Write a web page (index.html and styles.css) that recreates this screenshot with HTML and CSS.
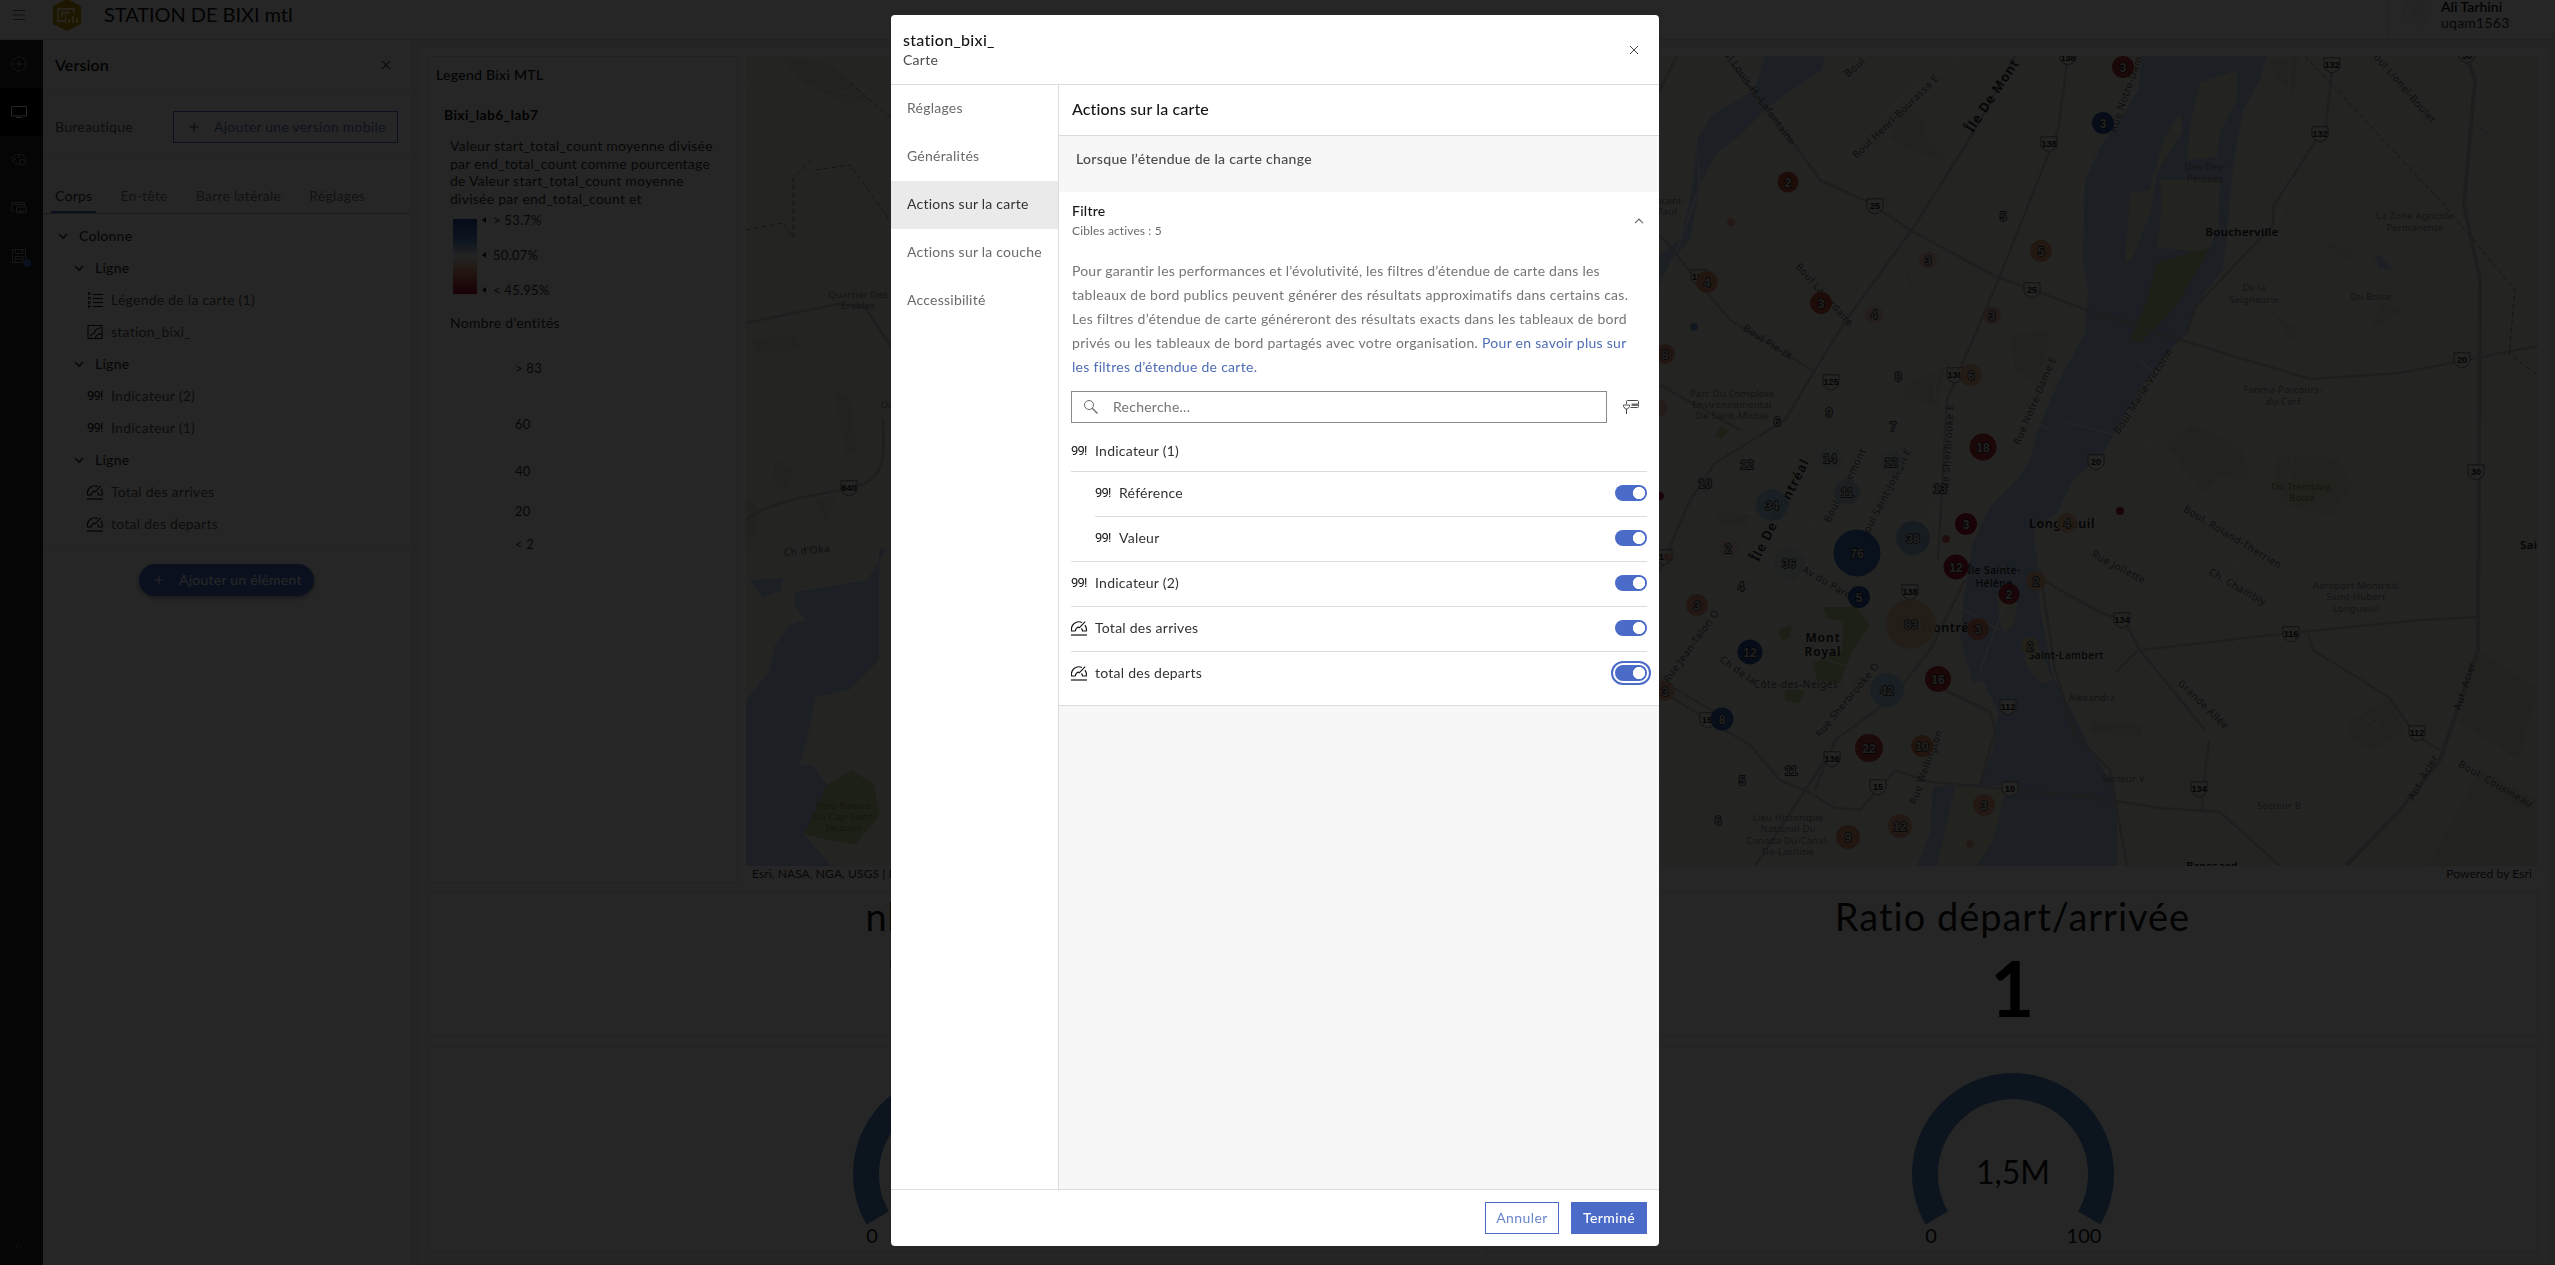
FILE: index.html
```html
<!DOCTYPE html>
<html lang="fr">
<head>
<meta charset="utf-8">
<title>STATION DE BIXI mtl</title>
<link rel="stylesheet" href="styles.css">
</head>
<body>
<svg class="defs" aria-hidden="true">
  <defs>
    <symbol id="i-chev" viewBox="0 0 16 16"><path d="M4 6l4 4 4-4" fill="none" stroke="currentColor" stroke-width="1.600"/></symbol>
    <symbol id="i-plus" viewBox="0 0 16 16"><path d="M8 3.500v9M3.500 8h9" fill="none" stroke="currentColor"/></symbol>
    <symbol id="i-x" viewBox="0 0 16 16"><path d="M4 4l8 8M12 4l-8 8" fill="none" stroke="currentColor" stroke-width="1.100"/></symbol>
    <symbol id="i-gauge" viewBox="0 0 16 16"><path d="M0 15h16" stroke="currentColor" stroke-width="1.200"/><path d="M4.500 11H.7A7.300 7.300 0 0 1 11 2.600M13.900 5.200a7.300 7.300 0 0 1 1.400 5.800H11.500a3.500 3.500 0 0 0-1.100-2.500M4.500 11A3.500 3.500 0 0 1 8 7.100M14.200 1.700L8 8.100" fill="none" stroke="currentColor" stroke-width="1.150"/></symbol>
    <symbol id="i-legend" viewBox="0 0 16 16"><path d="M1 1.500h2.500M1 6h2.500M1 10.500h2.500M1 14.500h2.500" stroke="currentColor" stroke-width="2.500" stroke-dasharray="1.500 .5"/><path d="M6 2.500h10M6 6.500h10M6 10.500h10M6 14.500h10" stroke="currentColor"/></symbol>
    <symbol id="i-map" viewBox="0 0 16 16"><path d="M1 1.500h14v13H1zM3.500 12.500c0-3 1.500-2 3.500-3.500s1-3 3-4 3 0 3-2M8.500 14c0-2.500 1-1.500 2.500-3.500 1-1.300 2.500-.5 4 0" fill="none" stroke="currentColor" stroke-width="1.100"/></symbol>
    <symbol id="shield" viewBox="0 0 18 18"><path d="M1 1.500q4 1.200 8 0 4 1.200 8 0v8.500q0 4-8 7.200-8-3.200-8-7.200z" fill="#f0f0ea" stroke="#777"/></symbol>
  </defs>
</svg>

<div class="app">
  <header class="topbar">
    <svg class="burger" viewBox="0 0 12 10"><path d="M0 .5h12M0 5h12M0 9.500h12" stroke="#6a6a6a"/></svg>
    <svg class="logo" viewBox="0 0 28 32"><path d="M14 0l14 7v18l-14 7L0 25V7z" fill="#c89800"/><path d="M12 22H5V10h16v4M9 18v-4.500h8" fill="none" stroke="#fff2b8" stroke-width="1.800"/><path d="M12.500 14v10" stroke="#fff2b8"/><path d="M16 20v4M20 17v7M24 19v5" stroke="#fff2b8" stroke-width="1.800"/></svg>
    <h1 class="topbar-title">STATION DE BIXI mtl</h1>
    <div class="user">
      <svg class="avatar" viewBox="0 0 28 28"><circle cx="14" cy="14" r="13.500" fill="#f6f6f6" stroke="#e6e6e6"/><circle cx="14" cy="10.500" r="5" fill="none" stroke="#ddd"/><path d="M5 24c1-9 17-9 18 0" fill="none" stroke="#ddd"/></svg>
      <div class="user-text"><b>Ali Tarhini</b><span>uqam1563</span></div>
    </div>
  </header>

  <div class="workspace">
    <nav class="rail">
      <span class="rail-item"><svg viewBox="0 0 16 16"><circle cx="8" cy="8" r="7" fill="none" stroke="currentColor"/><path d="M8 4.500v7M4.500 8h7" stroke="currentColor"/></svg></span>
      <span class="rail-item on"><svg viewBox="0 0 16 16"><path d="M.5 2.500h15v9.500H.5zM5 13.500h6" fill="none" stroke="currentColor"/></svg></span>
      <span class="rail-item"><svg viewBox="0 0 16 16"><path d="M7 12c-2 1-3-.5-4-1.500C-1 7 2 2.500 8 2.500c4 0 7 2 7 4.500" fill="none" stroke="currentColor"/><circle cx="4" cy="7" r="1" fill="currentColor"/><circle cx="8" cy="5" r="1" fill="currentColor"/><circle cx="11.500" cy="10" r="3" fill="none" stroke="currentColor"/></svg></span>
      <span class="rail-item"><svg viewBox="0 0 16 16"><path d="M4 11H.5V2.500h13V6M.5 4.500h13M5.500 7h9.500v6H5.500z" fill="none" stroke="currentColor"/><path d="M7 12l2-2.500 1.500 1.500 1-1 2 2z" fill="currentColor"/></svg></span>
      <span class="rail-item"><svg viewBox="0 0 16 16"><path d="M1.500 1.500h13v13h-13zM4.500 1.500v4h7v-4M4 14.500v-6h8v6M4 11h8" fill="none" stroke="currentColor"/></svg><i class="rail-dot"></i></span>
      <svg class="rail-expand" viewBox="0 0 16 16"><path d="M3.500 3.500L7.500 8l-4 4.500M8.500 3.500l4 4.500-4 4.500" fill="none" stroke="currentColor"/></svg>
    </nav>

    <aside class="panel">
      <div class="panel-head"><h2>Version</h2><svg class="ic"><use href="#i-x"/></svg></div>
      <div class="panel-version"><span>Bureautique</span><span class="btn-outline"><svg class="ic"><use href="#i-plus"/></svg>Ajouter une version mobile</span></div>
      <div class="tabs"><span class="tab on">Corps</span><span class="tab">En-tête</span><span class="tab">Barre latérale</span><span class="tab">Réglages</span></div>
      <ul class="tree">
        <li class="l1"><svg class="ic"><use href="#i-chev"/></svg>Colonne</li>
        <li class="l2"><svg class="ic"><use href="#i-chev"/></svg>Ligne</li>
        <li class="l3"><svg class="ic"><use href="#i-legend"/></svg>Légende de la carte (1)</li>
        <li class="l3"><svg class="ic"><use href="#i-map"/></svg>station_bixi_</li>
        <li class="l2"><svg class="ic"><use href="#i-chev"/></svg>Ligne</li>
        <li class="l3"><span class="n99">99!</span>Indicateur (2)</li>
        <li class="l3"><span class="n99">99!</span>Indicateur (1)</li>
        <li class="l2"><svg class="ic"><use href="#i-chev"/></svg>Ligne</li>
        <li class="l3"><svg class="ic"><use href="#i-gauge"/></svg>Total des arrives</li>
        <li class="l3"><svg class="ic"><use href="#i-gauge"/></svg>total des departs</li>
      </ul>
      <div class="panel-add"><span class="btn-pill"><svg class="ic"><use href="#i-plus"/></svg>Ajouter un élément</span></div>
    </aside>

    <main class="board">
      <section class="row-top">
        <div class="card legend">
          <h3>Legend Bixi MTL</h3>
          <h4>Bixi_lab6_lab7</h4>
          <p>Valeur start_total_count moyenne divisée<br>par end_total_count comme pourcentage<br>de Valeur start_total_count moyenne<br>divisée par end_total_count et</p>
          <div class="ramp"><i class="ramp-bar"></i><div class="ramp-labels"><span>&gt; 53.7%</span><span>50.07%</span><span>&lt; 45.95%</span></div></div>
          <p class="count-title">Nombre d’entités</p>
          <div class="sizes"><span class="s1">&gt; 83</span><span class="s2">60</span><span class="s3">40</span><span class="s4">20</span><span class="s5">&lt; 2</span></div>
        </div>
        <div class="map">
          <svg class="map-svg" viewBox="746 56 1792 810" width="1792" height="810">
            <rect x="746" y="56" width="1792" height="810" fill="#f0f0e6"/>
            <g class="green">
              <path d="M780 56l50 8 40 35-20 6-45-20zM752 340l40-5 10 14-45 5zM835 390l15 10 8 50-12 6zM746 500l10 5v30l-10 10zM775 460l20 10-10 20-12-8zM815 500l20-5-8 30z"/>
              <path d="M1905 105l15 8 10 30 15 15-30-5-25-15zM1905 385l40-18-8 40-35-10zM1900 260l14 25 20 8-25-8zM1720 510l30 5-5 12-28-4zM2010 335l40-5-10 55-25-15z"/>
              <path d="M2166 445l25-20 50 20 10 35-30-3-18 15zM2278 455l60 3 15 30-18 30-55-15-5-30zM2350 720l40-22 14 35-34 18-22-14zM2480 650l58 40-20 70-60-40zM2480 770l58 30v66h-110zM2320 240l35 12-8 8zM2370 330l12-28 20 8zM2270 310l28 20-4 12zM2090 722l52 2v12l-52-3zM2268 60l30-4-4 40-20-20z"/>
            </g>
            <g class="water">
              <path d="M887 549L867 580l-47 8-25 4-1 13 11 15-16 5-14 20-6 27-23 28v166h86l-28-31 23-50-15-20-12 0 9-35 6-33 34-7 30-30V549zM750 580l25-2 8 12-20 7zM775 578l10 0-5 8z"/>
              <path d="M1765 56h60l-3 14-37 25-20 15-25 25-25 20-15 30-10 55-20 22-11 23v-30l21-15 12-50 5-50 15-25 43-25z"/>
              <path d="M2142 56L2138 90 2120 120 2104 140 2085 180 2083 257 2088 293 2085 333 2063 373 2047 407 2037 433 2030 460 2017 480 1990 507 1973 543 1965 590 1960 637 1973 683 1983 680 1998 713 1993 750 1980 783 1933 787 1930 833 1917 866H2117V800L2113 783 2090 750 2083 733 2053 677 2040 610 2038 567 2033 530 2057 513 2073 480 2100 457 2107 447 2120 423 2140 390 2170 350 2187 333 2193 307 2223 270 2227 233 2233 167 2243 110 2260 80 2267 56z"/>
              <path d="M2374 258l6-3 12 14-12 0zM2476 125l15 10-4 0z"/>
            </g>
            <g fill="#e8ebd8">
              <path d="M2200 83L2237 70V100L2220 133 2217 157 2187 160 2190 127zM2160 180H2220L2218 228 2207 253 2157 247 2162 207zM2180 113L2183 130 2157 173 2150 213 2133 257 2125 263 2130 193 2150 190 2163 140zM1997 595l20 7-3 20-8 12-6-10zM2023 637l17 13 13 30-13 4-14-20zM1955 787l52-2-14 55-16 26h-40z"/>
            </g>
            <g class="park">
              <path d="M2157 263L2210 247 2190 283 2170 313 2140 343 2130 340 2147 300zM1823 607L1857 607 1870 625 1853 650 1840 683 1817 680 1813 663 1842 650 1843 622 1827 618zM1778 630l14-5-2 12-8 4zM1785 690l20 0-6 14-14-4zM1715 435l6-8 8 4-8 8zM827 785l25-15 22 15 6 30-25 30-25-5-26-5z"/>
            </g>
            <g class="lane">
              <path d="M1660 90L1690 56M1690 56l10 130-40 110M1720 150l240-94M1700 170l50 10 60-20 150-100M1820 180l110-110M1660 310l240 110 120 60M1660 440l340 190M1720 270l60-55 60-20M1660 500l200 30 110-25M1800 290l130 80 120 60M1900 220l-120 220M1760 380l-60 120M1820 420l-90 150M1870 440l-150 300M1940 330l-10 130-20 60M1980 300l-60 260M2060 300l40-200 30-30M1960 450l-40 90 50 10M1700 600l130-60M2010 590l-30 80M1660 780l90-40 90 20M1700 866l100-110 60-90M1880 760l-10 106M1950 700l-10 80M1760 640l100 30 40 30"/>
              <path d="M2120 425l50 30 80 130M2140 360l120 110M2170 350l90 40 120 20 60 50 30 80M2250 470l-20 110-50 60M2295 400l-5 80-50 80M2110 520l120 60 110 30M2310 600l20-80 40-60M2330 560l100-40 40 60M2240 640l160 100M2330 650l200 120M2260 800l80-40 60-60M2270 800l70 60M2140 700l60 60M2180 690l60-50M2280 240l10-184M2240 320l60-160M2410 160l90 40M2525 200l-25 120M2090 480l160 90M2060 420l110 30M2150 866l4-50M2240 866l-10-60M746 82l64 4 81 14M760 423l80 20 50 10"/>
            </g>
            <g class="road">
              <path d="M746 520c20-15 40-20 100-31 34-8 40-18 37-69M746 323L838 304l27 3 26 40M1660 90l30-60M1728 60L1795 145 1820 180 1870 203 1910 230 1995 276 2095 313 2150 330 2190 343 2310 379 2400 373 2538 346M2015 56L1975 130 1915 225 1845 322 1815 370 1785 420 1715 463 1690 500 1660 570M2068 56L2058 130 2000 276 1947 400 1938 560M1660 235L1730 320 1815 372M1660 385L1740 430M2332 72L2326 125 2273 207V225L2230 270 2195 307 2187 333M1660 690L1700 715 1750 745 1780 780 1810 793 1835 808 1860 810 1895 770 1930 782 2090 797 2160 808 2220 812 2280 866M1660 680l60 35M1815 790L1835 740 1890 700 1930 650 1965 580M1835 745l-80 121M1945 690L1990 712 1995 730 1980 785M2036 575L2060 590 2100 612 2125 622 2140 650 2205 730M2040 570L2055 670 2075 735 2110 770 2127 866M2209 740L2202 800 2203 812M2140 650L2290 633 2420 620 2480 617M2116 672l24-24M2308 635L2313 650 2390 698 2415 735 2440 750"/>
              <path d="M2468 60L2475 80 2464 205 2480 280 2479 460 2478 650 2440 760 2400 810 2346 866" stroke-width="4"/>
            </g>
            <g class="dash"><path d="M2305 56l140 150 70 84-6 64 30 22M850 83l41 35M746 230l37-7 10 15v-60l19-18M815 170l35-5 41 57"/></g>

            <g class="shields">
              <use href="#shield" width="18" height="18" x="840" y="479"/><text x="849" y="491">640</text>
              <use href="#shield" width="18" height="18" x="1866" y="197"/><text x="1875" y="209">25</text>
              <use href="#shield" width="18" height="18" x="2040" y="135"/><text x="2049" y="147">138</text>
              <use href="#shield" width="18" height="18" x="2059" y="48"/><text x="2068" y="61">138</text>
              <use href="#shield" width="18" height="18" x="2023" y="281"/><text x="2032" y="293">25</text>
              <use href="#shield" width="18" height="18" x="1690" y="268"/><text x="1697" y="280">15</text>
              <use href="#shield" width="18" height="18" x="1822" y="373"/><text x="1831" y="385">125</text>
              <use href="#shield" width="18" height="18" x="1946" y="366"/><text x="1955" y="378">138</text>
              <use href="#shield" width="18" height="18" x="2323" y="56"/><text x="2332" y="68">132</text>
              <use href="#shield" width="18" height="18" x="2311" y="125"/><text x="2320" y="137">132</text>
              <use href="#shield" width="18" height="18" x="2458" y="46"/><text x="2467" y="59">30</text>
              <use href="#shield" width="18" height="18" x="2453" y="351"/><text x="2462" y="363">20</text>
              <use href="#shield" width="18" height="18" x="2087" y="453"/><text x="2096" y="465">20</text>
              <use href="#shield" width="18" height="18" x="2467" y="463"/><text x="2476" y="475">30</text>
              <use href="#shield" width="18" height="18" x="2113" y="611"/><text x="2122" y="623">134</text>
              <use href="#shield" width="18" height="18" x="2282" y="625"/><text x="2291" y="637">116</text>
              <use href="#shield" width="18" height="18" x="2408" y="724"/><text x="2417" y="736">112</text>
              <use href="#shield" width="18" height="18" x="2190" y="780"/><text x="2199" y="792">134</text>
              <use href="#shield" width="18" height="18" x="1901" y="583"/><text x="1910" y="595">138</text>
              <use href="#shield" width="18" height="18" x="1999" y="698"/><text x="2008" y="710">112</text>
              <use href="#shield" width="18" height="18" x="2001" y="780"/><text x="2010" y="792">10</text>
              <use href="#shield" width="18" height="18" x="1869" y="778"/><text x="1878" y="790">15</text>
              <use href="#shield" width="18" height="18" x="1823" y="750"/><text x="1832" y="762">136</text>
              <use href="#shield" width="18" height="18" x="1699" y="711"/><text x="1707" y="723">15</text>
              <use href="#shield" width="18" height="18" x="1655" y="548"/><text x="1664" y="560">15</text>
            </g>

            <g class="lbl">
              <text x="858" y="298">Quartier Des</text><text x="858" y="309">Érables</text>
              <text x="807" y="554" transform="rotate(-5 807 551)" class="st">Ch d'Oka</text>
              <text x="890" y="408">Oka</text>
              <text x="1669" y="204">incent-</text><text x="1667" y="215">Paul</text>
              <text x="2205" y="170">Des-Iles-</text><text x="2205" y="182">Percees</text>
              <text x="2415" y="219">La Zone Agricole</text><text x="2415" y="231">Permanente</text>
              <text x="2254" y="291">De la</text><text x="2254" y="303">Seigneurie</text>
              <text x="2371" y="300">Du Boise</text>
              <text x="2283" y="393">Fatima-Parcours-</text><text x="2283" y="405">du-Cerf</text>
              <text x="2356" y="589">Aéroport Montréal</text><text x="2356" y="600">Saint-Hubert</text><text x="2356" y="612">Longueuil</text>
              <text x="2123" y="782">Secteur V</text><text x="2279" y="809">Secteur B</text>
              <text x="2092" y="701">Alexandra</text>
              <text x="1788" y="821">Lieu Historique</text><text x="1788" y="832">National Du</text><text x="1788" y="844">Canada Du-Canal-</text><text x="1788" y="855">De-Lachine</text>
            </g>
            <g class="lbl grn">
              <text x="1732" y="397">Parc Du Complexe</text><text x="1732" y="408">Environnemental</text><text x="1732" y="419">De Saint-Michel</text>
              <text x="2302" y="490">Du Tremblay,</text><text x="2302" y="501">Boisé</text>
              <text x="844" y="809">Parc-Nature</text><text x="844" y="820">Du Cap-Saint-</text><text x="844" y="831">Jacques</text>
            </g>
            <g class="st">
              <text x="1757" y="100" transform="rotate(54 1757 100)">ul Louis-H.-Lafontaine</text>
              <text x="1857" y="70" transform="rotate(-40 1857 70)">Boul</text>
              <text x="1898" y="119" transform="rotate(-44 1898 119)">Boul Henri-Bourassa E</text>
              <text x="1822" y="297" transform="rotate(48 1822 297)">Boul Lacordaire</text>
              <text x="1766" y="345" transform="rotate(33 1766 345)">Boul Pie-IX</text>
              <text x="2038" y="402" transform="rotate(-67 2038 402)">Rue Notre-Dame E</text>
              <text x="2130" y="92" transform="rotate(-70 2130 92)">Rue Notre-Dame</text>
              <text x="1951" y="450" transform="rotate(-86 1951 450)">Rue Sherbrooke E</text>
              <text x="2400" y="88" transform="rotate(49 2400 88)">Boul Lionel-Boulet</text>
              <text x="2146" y="393" transform="rotate(-57 2146 393)">Boul Marie-Victorin</text>
              <text x="2231" y="540" transform="rotate(31 2231 540)">Boul. Roland-Therrien</text>
              <text x="2236" y="590" transform="rotate(30 2236 590)">Ch. Chambly</text>
              <text x="2117" y="570" transform="rotate(28 2117 570)">Rue Joliette</text>
              <text x="2201" y="707" transform="rotate(44 2201 707)">Grande Allée</text>
              <text x="2468" y="687" transform="rotate(-72 2468 687)">Aut. Acier</text>
              <text x="2426" y="779" transform="rotate(-60 2426 779)">Aut. Acier</text>
              <text x="2494" y="787" transform="rotate(30 2494 787)">Boul. Cousineau</text>
              <text x="1848" y="487" transform="rotate(-63 1848 487)">Boul. Rosemont</text>
              <text x="1889" y="495" transform="rotate(-63 1889 495)">Boul Saint-Joseph E</text>
              <text x="1825" y="585" transform="rotate(30 1825 585)">Av du Parc</text>
              <text x="1694" y="648" transform="rotate(-54 1694 648)">Rue Jean-Talon O</text>
              <text x="1736" y="673" transform="rotate(35 1736 673)">Ch de la</text>
              <text x="1796" y="688">Côte-des-Neiges</text>
              <text x="1850" y="702" transform="rotate(-50 1850 702)">Rue Sherbrooke O</text>
              <text x="1929" y="768" transform="rotate(-70 1929 768)">Rue Wellington</text>
            </g>
            <g class="city">
              <text x="1996" y="98" transform="rotate(-56 1996 98)" class="isle">Île De Mont</text>
              <text x="1784" y="512" transform="rotate(-63 1784 512)" class="isle">Île De Montréal</text>
              <text x="2242" y="236">Boucherville</text>
              <text x="2062" y="528" class="lg">Longueuil</text>
              <text x="1951" y="632" class="lg">Montréal</text>
              <text x="1823" y="642" class="big">Mont</text><text x="1823" y="656" class="big">Royal</text>
              <text x="1994" y="574" class="sm">Île Sainte-</text><text x="1994" y="587" class="sm">Hélène</text>
              <text x="2066" y="659" class="sm">Saint-Lambert</text>
              <text x="2212" y="870">Brossard</text>
              <text x="2535" y="549">Saint</text>
            </g>

            <g class="dots">
              <circle cx="1731" cy="222" r="4" fill="#f0a088"/><circle cx="1694" cy="327" r="4" fill="#6f9ae0"/><circle cx="1660" cy="496" r="4" fill="#a50026"/><circle cx="2120" cy="511" r="4" fill="#a50026"/><circle cx="1946" cy="539" r="4" fill="#d0564e"/><circle cx="1970" cy="844" r="4" fill="#e9a68c"/><circle cx="1668" cy="557" r="4" fill="#e9a68c"/>
              <circle cx="1788" cy="182" r="10.500" fill="#c4402e"/><circle cx="1707" cy="282" r="11" fill="#df8e62"/><circle cx="1821" cy="303" r="11" fill="#c4402e"/><circle cx="1665" cy="354" r="10" fill="#e08c78"/><circle cx="1660" cy="408" r="8" fill="#eeb8a0"/>
              <circle cx="1928" cy="260" r="9" fill="#ecc6b4"/><circle cx="1874" cy="314" r="9" fill="#ecc6b4"/><circle cx="1992" cy="315" r="9" fill="#e8b09c"/><circle cx="2041" cy="251" r="11" fill="#df9468"/><circle cx="1971" cy="375" r="11" fill="#eab084"/><circle cx="1983" cy="447" r="13.500" fill="#ac1828"/>
              <circle cx="2123" cy="67" r="11" fill="#ad2026"/><circle cx="2103" cy="123" r="11" fill="#1c3fa2"/>
              <circle cx="1772" cy="505" r="16" fill="#a9cbe6"/><circle cx="1847" cy="492" r="13" fill="#b4d2e8"/><circle cx="1830" cy="458" r="12" fill="#dbe6ea"/><circle cx="1891" cy="462" r="12" fill="#d0e2ea"/><circle cx="1789" cy="563" r="16" fill="#dde7ec"/><circle cx="1705" cy="483" r="10" fill="#e4e8e8"/>
              <circle cx="1857" cy="553" r="23.500" fill="#2b62b4"/><circle cx="1913" cy="538" r="17" fill="#93b1dd"/><circle cx="1966" cy="524" r="11" fill="#a50026"/><circle cx="1956" cy="567" r="12.500" fill="#a50020"/><circle cx="1859" cy="597" r="11" fill="#1c3fa2"/><circle cx="1911" cy="624" r="25" fill="#efc2a0"/>
              <circle cx="2067" cy="523" r="10" fill="#eeb888"/><circle cx="2036" cy="581" r="10" fill="#eeb888"/><circle cx="2009" cy="594" r="10.500" fill="#ac1828"/><circle cx="1978" cy="629" r="11" fill="#de7c5c"/><circle cx="2030" cy="646" r="9" fill="#f0dcaa"/>
              <circle cx="1697" cy="605" r="11" fill="#df9070"/><circle cx="1750" cy="652" r="12.500" fill="#1c3fa2"/><circle cx="1938" cy="679" r="13" fill="#b01226"/><circle cx="1887" cy="690" r="17" fill="#a9cbe6"/><circle cx="1665" cy="691" r="10" fill="#e9a68c"/><circle cx="1722" cy="719" r="11.500" fill="#265cb0"/><circle cx="1869" cy="748" r="14" fill="#b62c34"/><circle cx="1922" cy="746" r="11" fill="#de8448"/><circle cx="1984" cy="805" r="11" fill="#e89c7c"/><circle cx="1900" cy="826" r="12" fill="#e4a07c"/><circle cx="1848" cy="837" r="12" fill="#de8866"/><circle cx="1728" cy="548" r="9" fill="#efdcd0"/>
            </g>
            <g class="num">
              <text x="1788" y="187">2</text><text x="1707" y="287">4</text><text x="1821" y="308">3</text><text x="1665" y="359">8</text><text x="1928" y="265">3</text><text x="1874" y="319">4</text><text x="1992" y="320">3</text><text x="2041" y="256">5</text><text x="1971" y="380">6</text><text x="1983" y="452">18</text><text x="2003" y="221">5</text><text x="1898" y="381">8</text><text x="1829" y="417">9</text><text x="1777" y="426">6</text><text x="1893" y="431">7</text>
              <text x="2123" y="72">3</text><text x="2103" y="128">3</text><text x="1772" y="510">34</text><text x="1847" y="497">11</text><text x="1830" y="463">14</text><text x="1891" y="467">12</text><text x="1747" y="469">12</text><text x="1705" y="488">10</text><text x="1789" y="568">36</text><text x="1940" y="493">13</text><text x="1728" y="553">2</text><text x="1741" y="591">4</text>
              <text x="1857" y="558">76</text><text x="1913" y="543">38</text><text x="1966" y="529">3</text><text x="1956" y="572">12</text><text x="1859" y="602">5</text><text x="1911" y="629">83</text><text x="2067" y="528">4</text><text x="2036" y="586">2</text><text x="2009" y="599">2</text><text x="1978" y="634">3</text><text x="2030" y="651">2</text>
              <text x="1697" y="610">3</text><text x="1750" y="657">12</text><text x="1938" y="684">16</text><text x="1887" y="695">42</text><text x="1665" y="696">3</text><text x="1722" y="724">8</text><text x="1869" y="753">22</text><text x="1922" y="751">10</text><text x="1984" y="810">3</text><text x="1900" y="831">12</text><text x="1848" y="842">9</text><text x="1791" y="775">11</text><text x="1742" y="785">5</text><text x="1718" y="825">6</text>
            </g>
          </svg>
          <div class="attrib"><span>Esri, NASA, NGA, USGS | Esri Canada, Esri, TomTom, Garmin</span><span>Powered by Esri</span></div>
        </div>
      </section>
      <section class="row-kpi">
        <div class="card kpi"><h3>nb station</h3><b>794</b></div>
        <div class="card kpi"><h3>Ratio départ/arrivée</h3><b>1</b></div>
      </section>
      <section class="row-gauge">
        <div class="card gauge">
          <svg viewBox="0 0 204 180"><path d="M14.500 152.500A101 101 0 1 1 189.500 152.500L167 139.500A75 75 0 1 0 37 139.500z" fill="#4f8bc4"/><text x="102" y="112" class="g-val">1,5M</text><text x="20" y="171" class="g-end">0</text><text x="173" y="171" class="g-end">100</text></svg>
        </div>
        <div class="card gauge">
          <svg viewBox="0 0 204 180"><path d="M14.500 152.500A101 101 0 1 1 189.500 152.500L167 139.500A75 75 0 1 0 37 139.500z" fill="#4f8bc4"/><text x="102" y="112" class="g-val">1,5M</text><text x="20" y="171" class="g-end">0</text><text x="173" y="171" class="g-end">100</text></svg>
        </div>
      </section>
    </main>
  </div>
</div>

<div class="scrim">
  <div class="modal">
    <header class="m-head">
      <div><h2>station_bixi_</h2><p>Carte</p></div>
      <svg class="m-close" viewBox="0 0 10 10"><path d="M1 1l8 8M9 1L1 9" stroke="#4a4a4a" fill="none"/></svg>
    </header>
    <div class="m-body">
      <nav class="m-nav"><span>Réglages</span><span>Généralités</span><span class="on">Actions sur la carte</span><span>Actions sur la couche</span><span>Accessibilité</span></nav>
      <section class="m-main">
        <h3 class="m-title">Actions sur la carte</h3>
        <p class="m-when">Lorsque l’étendue de la carte change</p>
        <div class="filter">
          <div class="f-head">
            <div><h4>Filtre</h4><p>Cibles actives : 5</p></div>
            <svg class="f-chev" viewBox="0 0 10 6"><path d="M1 5.200L5 1l4 4.200" fill="none" stroke="#6a6a6a" stroke-width="1.200"/></svg>
          </div>
          <p class="f-text"><span class="f-line1">Pour garantir les performances et l’évolutivité, les filtres d’étendue de carte dans les</span><br>tableaux de bord publics peuvent générer des résultats approximatifs dans certains cas.<br>Les filtres d’étendue de carte généreront des résultats exacts dans les tableaux de bord<br>privés ou les tableaux de bord partagés avec votre organisation. <a>Pour en savoir plus sur<br>les filtres d’étendue de carte.</a></p>
          <div class="f-search">
            <div class="search"><svg viewBox="0 0 16 16"><circle cx="6" cy="6" r="4.500" fill="none" stroke="#6a6a6a"/><path d="M9.300 9.300L14.500 14.500" stroke="#6a6a6a" stroke-width="1.300"/></svg>Recherche...</div>
            <svg class="f-icon" viewBox="0 0 16 14"><path d="M3.500 4V1.500q0-1 1-1h10q1 0 1 1v5q0 1-1 1H7.500" fill="none" stroke="#4a4a4a"/><path d="M8.500 3.500H16v2.500H8.500z" fill="#6a6a6a"/><path d="M.5 5h6v1.500L4.500 9h-2L.5 6.500zM3.500 9v5" fill="#fff" stroke="#4a4a4a"/></svg>
          </div>
          <ul class="targets">
            <li class="t-first"><span class="n99">99!</span>Indicateur (1)</li>
            <li class="sub"><span class="n99">99!</span>Référence<i class="switch"></i></li>
            <li class="sub last"><span class="n99">99!</span>Valeur<i class="switch"></i></li>
            <li><span class="n99">99!</span>Indicateur (2)<i class="switch"></i></li>
            <li><svg class="ic"><use href="#i-gauge"/></svg>Total des arrives<i class="switch"></i></li>
            <li><svg class="ic"><use href="#i-gauge"/></svg>total des departs<i class="switch focus"></i></li>
          </ul>
        </div>
      </section>
    </div>
    <footer class="m-foot"><span class="btn cancel">Annuler</span><span class="btn done">Terminé</span></footer>
  </div>
</div>
</body>
</html>
```
FILE: styles.css
```css
* { box-sizing: border-box; margin: 0; padding: 0; }
body { width: 100%; height: 1265px; overflow: hidden; font: 14px/20px Lato, "Liberation Sans", sans-serif; letter-spacing: .25px; color: #323232; background: #fff; }
ul { list-style: none; }
h1, h2, h3, h4 { font-weight: 500; color: #151515; }
.defs { position: absolute; width: 0; height: 0; }
.ic { width: 16px; height: 16px; flex: none; }
.n99 { width: 16px; flex: none; font: 400 13px/20px Roboto, sans-serif; letter-spacing: -.8px; color: #151515; white-space: nowrap; }

/* application shell */
.app { display: flex; flex-direction: column; height: 1265px; }
.topbar { display: flex; align-items: flex-start; height: 40px; border-bottom: 1px solid #dcdcdc; flex: none; }
.burger { width: 12px; height: 10px; margin: 10px 0 0 13px; }
.logo { width: 28px; height: 32px; margin: -1px 0 0 28px; }
.topbar-title { margin-left: 23px; font-size: 20px; line-height: 28px; font-weight: 400; letter-spacing: -.05px; }
.user { display: flex; gap: 10px; width: 167px; height: 39px; margin-left: auto; padding-left: 14px; border-left: 1px solid #dcdcdc; }
.avatar { width: 28px; height: 28px; margin-top: -3px; }
.user-text { display: flex; flex-direction: column; line-height: 16px; margin-top: -1px; }
.user-text b { font-weight: 600; color: #151515; letter-spacing: 0; }
.workspace { display: flex; flex: 1; min-height: 0; }

.rail { display: flex; flex-direction: column; width: 43px; background: #242424; color: #9a9a9a; }
.rail-item { position: relative; display: flex; align-items: center; height: 48px; padding-left: 11px; }
.rail-item svg { width: 16px; height: 16px; }
.rail-item.on { background: #000; color: #fff; }
.rail-dot { position: absolute; left: 23px; top: 27px; width: 8px; height: 8px; border-radius: 50%; background: #3f6fc8; }
.rail-expand { width: 12px; height: 14px; margin: auto 0 12px 12px; color: #8a8a8a; }

.panel { width: 367px; background: #fff; color: #5a5a5a; }
.panel-head { display: flex; justify-content: space-between; align-items: center; height: 52px; padding: 0 16px 2px 12px; border-bottom: 1px solid #e6e6e6; color: #4a4a4a; }
.panel-head h2 { font-size: 16px; font-weight: 600; letter-spacing: .1px; }
.panel-version { display: flex; justify-content: space-between; align-items: center; height: 64px; padding: 6px 12px 0; border-bottom: 1px solid #e6e6e6; }
.btn-outline { display: flex; align-items: center; gap: 12px; width: 225px; height: 32px; padding-left: 12px; border: 1px solid #4a6bc8; color: #6078b8; }
.btn-outline .ic { color: #323232; }
.tabs { display: flex; gap: 20px; height: 58px; padding: 18px 8px 0; align-items: stretch; border-bottom: 1px solid #b0b0b0; color: #7a7a7a; }
.tab { padding: 12px 4px 0; border-bottom: 2px solid transparent; }
.tab.on { color: #323232; border-color: #4a6bc8; }
.tree { padding-top: 6px; height: 333px; border-bottom: 1px solid #e6e6e6; }
.tree li { display: flex; align-items: center; height: 32px; gap: 8px; color: #5a5a5a; }
.tree .l1 { padding-left: 12px; color: #323232; font-weight: 500; }
.tree .l2 { padding-left: 28px; color: #323232; font-weight: 500; }
.tree .l3 { padding-left: 44px; }
.tree .l3 .ic { color: #151515; }
.panel-add { display: flex; justify-content: center; padding: 17px 0 0; }
.btn-pill { display: flex; align-items: center; gap: 12px; height: 32px; width: 175px; padding-left: 12px; border-radius: 16px; background: #4a6bc8; color: #fff; box-shadow: 0 2px 5px rgba(0,0,0,.4); }

.board { flex: 1; display: flex; flex-direction: column; gap: 8px; padding: 8px 9px 12px 8px; background: #fff; border: solid #ededed; border-width: 8px 8px 2px 10px; }
.card { border: 1px solid #e2e2e2; background: #fff; }
.row-top { display: flex; gap: 8px; height: 827px; }
.legend { width: 310px; padding: 8px 0 0 7px; }
.legend h3 { font-size: 14px; font-weight: 500; letter-spacing: .3px; }
.legend h4 { font-size: 14px; font-weight: 700; letter-spacing: .33px; margin: 20px 0 12px 8px; }
.legend p { margin-left: 14px; line-height: 17.600px; white-space: nowrap; }
.ramp { display: flex; gap: 10px; margin: 12px 0 0 17px; height: 75px; }
.ramp-bar { width: 24px; background: linear-gradient(#2a45a8, #5b95cc 30%, #e8ecec 50%, #e6a07c 68%, #a50026); }
.ramp-labels { display: flex; flex-direction: column; justify-content: space-between; margin: -8px 0 -5px; font-size: 13px; line-height: 18px; }
.ramp-labels span::before { content: ""; display: inline-block; border: 3px solid transparent; border-left: 0; border-right: 4px solid #151515; margin: 0 7px 2px -5px; }
.legend .count-title { margin-top: 20px; }
.sizes { display: flex; flex-direction: column; padding-left: 79px; font-size: 13px; line-height: 20px; }
.s1 { margin-top: 26px; }
.s2 { margin-top: 36px; }
.s3 { margin-top: 27px; }
.s4 { margin-top: 20px; }
.s5 { margin-top: 13px; }
.map { flex: 1; display: flex; flex-direction: column; overflow: hidden; }
.attrib { display: flex; justify-content: space-between; height: 17px; padding: 0 6px; font-size: 12px; line-height: 16px; letter-spacing: .1px; }
.row-kpi, .row-gauge { display: grid; grid-template-columns: 1fr 1fr; gap: 8px; }
.row-kpi { height: 144px; }
.row-gauge { height: 207px; margin-top: 3px; }
.kpi { display: flex; flex-direction: column; align-items: center; }
.kpi h3 { margin-top: -1px; font-size: 38px; line-height: 50px; font-weight: 400; letter-spacing: .98px; }
.kpi b { font-size: 76px; line-height: 94px; font-weight: 700; color: #000; }
.gauge { display: flex; justify-content: center; padding-top: 25px; }
.gauge svg { width: 204px; height: 180px; }
.g-val, .g-end { text-anchor: middle; fill: #151515; }
.g-val { font-size: 32px; letter-spacing: 0; }
.g-end { font-size: 20px; letter-spacing: 0; }

/* map drawing */
.map-svg { display: block; flex: none; letter-spacing: 0; font-family: "Noto Sans", sans-serif; }
.green { fill: #e0e6c8; }
.water { fill: #b9cdec; }
.park { fill: #c4d493; }
.lane { fill: none; stroke: #fbfbf8; stroke-width: 1.200; }
.road { fill: none; stroke: #c8c6c6; stroke-width: 2.600; stroke-linejoin: round; }
.dash { fill: none; stroke: #8a8a88; stroke-dasharray: 5 3; }
.shields text { font: 600 9px "Liberation Sans", sans-serif; text-anchor: middle; fill: #222; }
.lbl text { font-size: 9.500px; text-anchor: middle; fill: #8a8a88; letter-spacing: .2px; }
.lbl.grn text { fill: #7f9558; }
.st text, .lbl text.st { font-size: 10px; text-anchor: middle; fill: #666; letter-spacing: .5px; }
.city text { font: 600 11.500px "Noto Sans", sans-serif; text-anchor: middle; fill: #222; letter-spacing: .3px; }
.city .isle { font-size: 13px; letter-spacing: 1px; }
.city .big { font-size: 12px; letter-spacing: 1px; }
.city .lg { font-size: 12.500px; letter-spacing: .6px; }
.city .sm { font-size: 10.500px; font-weight: 500; }
.dots circle { opacity: .9; }
.num text { font: 600 12px "Liberation Sans", sans-serif; text-anchor: middle; fill: #ddd; stroke: #222; stroke-width: 1.500px; paint-order: stroke; }

/* dialog */
.scrim { position: fixed; inset: 0; display: flex; justify-content: center; padding: 15px 5px 19px 0; background: rgba(0,0,0,.85); }
.modal { display: flex; flex-direction: column; width: 768px; height: 1231px; border-radius: 4px; background: #fff; overflow: hidden; }
.m-head { display: flex; justify-content: space-between; align-items: center; height: 70px; padding: 0 20px 0 12px; border-bottom: 1px solid #dcdcdc; }
.m-head h2 { font-size: 16px; line-height: 20px; letter-spacing: .29px; }
.m-head p { color: #4a4a4a; }
.m-close { width: 10px; height: 10px; margin-top: 1px; }
.m-body { display: flex; flex: 1; min-height: 0; }
.m-nav { display: flex; flex-direction: column; width: 168px; border-right: 1px solid #dcdcdc; color: #6a6a6a; }
.m-nav span { height: 48px; padding: 13px 0 0 16px; letter-spacing: .23px; }
.m-nav .on { background: #eaeaea; color: #323232; }
.m-main { flex: 1; background: #f7f7f7; }
.m-title { height: 51px; padding: 14px 13px 0; font-size: 16px; line-height: 20px; letter-spacing: .14px; background: #fff; border-bottom: 1px solid #dcdcdc; }
.m-when { height: 56px; padding: 13px 17px 0; color: #4a4a4a; font-weight: 500; letter-spacing: .33px; }
.filter { height: 514px; padding: 9px 12px 0; background: #fff; border-bottom: 1px solid #dcdcdc; }
.f-head { display: flex; justify-content: space-between; align-items: center; padding: 0 3px 0 1px; }
.f-head h4 { font-size: 14px; }
.f-head p { font-size: 12px; letter-spacing: .12px; color: #6a6a6a; }
.f-chev { width: 10px; height: 6px; }
.f-text { margin-top: 18px; line-height: 24px; padding-left: 1px; color: #757575; letter-spacing: .28px; white-space: nowrap; }
.f-line1 { letter-spacing: .2px; }
.f-text a { color: #4f6db5; }
.f-search { display: flex; justify-content: space-between; align-items: center; margin-top: 12px; padding-right: 8px; }
.search { display: flex; align-items: center; gap: 14px; width: 536px; height: 32px; padding-left: 11px; border: 1px solid #8a8a8a; color: #757575; }
.search svg { width: 16px; height: 16px; }
.f-icon { width: 16px; height: 14px; }
.targets li { display: flex; align-items: center; gap: 8px; height: 45px; padding-bottom: 3px; border-top: 1px solid #dcdcdc; }
.targets li.t-first { height: 48px; padding-top: 8px; border: 0; padding-bottom: 1px; }
.targets li.sub { margin-left: 24px; }
.targets li.sub:nth-child(2) { margin-left: 0; padding-left: 24px; }
.targets .ic { color: #151515; }
.switch { width: 32px; height: 16px; margin-left: auto; border-radius: 8px; background: radial-gradient(circle at 24px 8px, #fff 5.800px, transparent 6.400px), #4a6bc8; }
.switch.focus { outline: 2px solid #4a6bc8; outline-offset: 2px; }
.m-foot { display: flex; justify-content: flex-end; align-items: center; gap: 12px; height: 57px; padding: 0 12px 1px 0; border-top: 1px solid #dcdcdc; }
.btn { height: 32px; line-height: 29px; text-align: center; border: 1px solid #4a6bc8; letter-spacing: .4px; }
.cancel { width: 74px; color: #6a85cc; }
.done { width: 76px; background: #4a6bc8; color: #fff; font-weight: 500; }
```
